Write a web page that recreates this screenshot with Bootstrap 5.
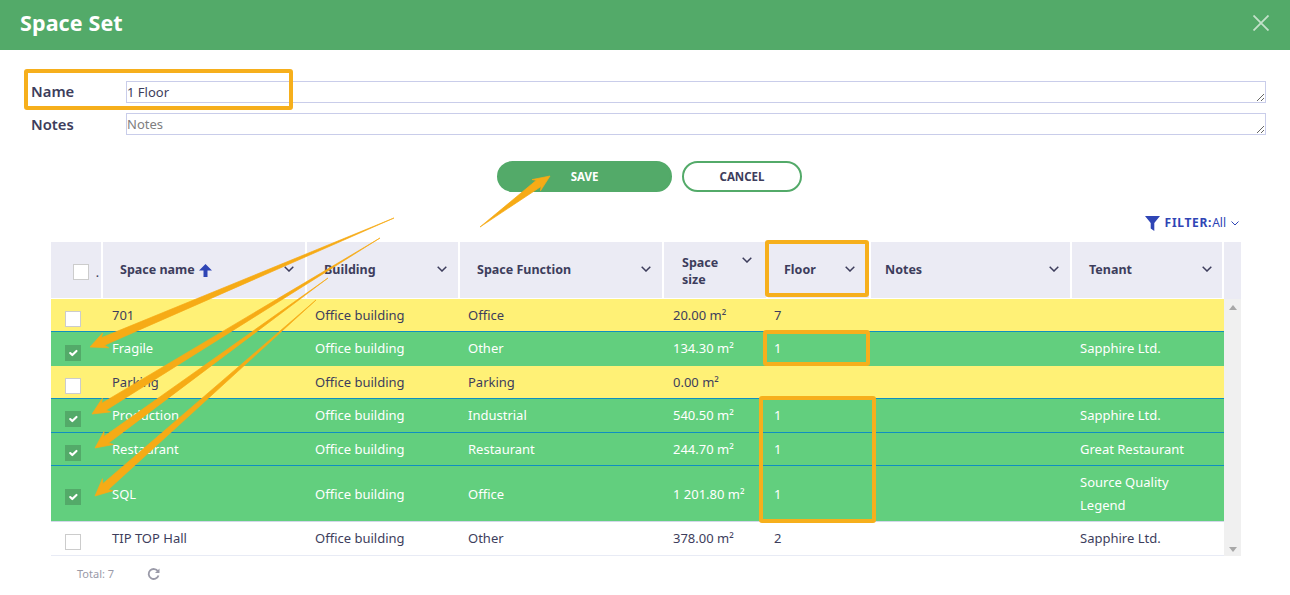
<!DOCTYPE html>
<html lang="en">
<head>
<meta charset="utf-8">
<title>Space Set</title>
<link rel="stylesheet" href="https://cdn.jsdelivr.net/npm/bootstrap@5.3.0/dist/css/bootstrap.min.css">
<style>
body{margin:0;font-family:"Noto Sans","Open Sans","Liberation Sans",sans-serif;font-size:13px;color:#3d3d5c;background:#fff}
.page-wrap{position:relative;width:1290px;height:595px;overflow:hidden}
.top-bar{height:50px;background:#53aa69;color:#fff;padding:0 21px 0 20px}
.top-bar h1{font-size:21.5px;font-weight:700;margin:0 0 5px;letter-spacing:.1px}
.close-x{background:none;border:0;padding:0;line-height:0;margin-bottom:5px}
.form-area{padding:31px 24px 0 31px}
.form-line{height:22px}
.form-line+.form-line{margin-top:10px}
.form-line label{width:95px;font-size:14.8px;font-weight:600;color:#3d3d5c;margin-bottom:2px}
.form-line+.form-line label{margin-bottom:0}
.form-line textarea{flex:1;height:22px;border:1px solid #c9cdea;border-radius:0;padding:0;font-size:13px;line-height:20px;color:#3d3d5c;outline:0;font-family:inherit;display:block}
.form-line textarea::placeholder{color:#808080}
.action-line{margin-top:26px;padding-left:9px;gap:10px}
.act-btn{height:31px;border-radius:16px;font-size:11.5px;font-weight:700;padding:0;line-height:1}
.act-save{width:175px;background:#53aa69;border:2px solid #53aa69;color:#fff}
.act-cancel{width:120px;background:#fff;border:2px solid #53aa69;color:#3d3d5c}
.filter-line{height:50px;padding:0 51px 10px 0;color:#2f45b5;font-size:12px;gap:5px}
.filter-line b{letter-spacing:.7px;font-weight:700}
.filter-funnel{margin-bottom:1px}
.filter-chev{margin:0 0 6px 0}
.grid-shell{margin:0 49px 0 51px;border-bottom:0}
.grid-table{table-layout:fixed;width:1173px;margin:0;border-collapse:separate;border-spacing:0}
.grid-table>thead>tr>th{height:57px;background:#ebebf4;color:#3d3d5c;font-size:12.5px;font-weight:700;padding:0 11px 0 17px;border:0;border-right:2px solid #fff;border-bottom:1px solid #fff;line-height:17px;vertical-align:middle;box-shadow:none}
.grid-table>tbody>tr>td{height:33px;padding:0 8px;border:0;vertical-align:middle;color:#3d3d5c;background:#fff;font-size:13px;line-height:23px;box-shadow:none}
.grid-table>tbody>tr.tall-row>td{height:34px;padding-bottom:1px}
.grid-table>tbody>tr.double-row>td{height:56px;padding-top:1px}
.grid-table>tbody>tr.row-yellow>td{background:#fff176}
.grid-table>tbody>tr.row-green>td{background:#62cf7e;color:#fff}
.grid-table>tbody>tr.line-blue>td{border-bottom:1px solid #0f8fc0}
.grid-table>tbody>tr.line-soft>td{border-bottom:1px solid #d3d8ea}
.grid-table>tbody>tr.line-end>td{border-bottom:1px solid #e8ebf5}
.grid-table>tbody>tr>td:nth-child(2),.grid-table>tbody>tr>td:nth-child(5){padding-left:9px}
.grid-table>tbody>tr>td:nth-child(6){padding-left:6px}
.grid-table>thead>tr>th:nth-child(5){padding-left:18px;padding-right:14px}
.grid-table>thead>tr>th:nth-child(6){padding-left:16px;padding-right:14px}
.grid-table>thead>tr>th:nth-child(7){padding-left:14px}
.grid-table>thead>tr>th:nth-child(8){padding-right:10px}
.grid-table>thead>tr>th:first-child{padding:0 0 0 22px}
.grid-table>tbody>tr>td:first-child{padding:0 0 0 14px}
.head-text{margin-bottom:2px}
.head-two{margin-top:2px}
.sort-up{margin-left:1px;vertical-align:-3px}
.chev{flex:none;margin-bottom:3px}
.chev-high{align-self:flex-start;margin:5px 0 0}
.tick-box.form-check-input{width:16px;height:16px;border-radius:0;border:1px solid #ccc;margin:7px 0 0;display:block;background-color:#fff;box-shadow:none;float:none}
.tick-box.form-check-input:checked{background-color:#53aa69;border-color:#53aa69}
.head-tick.form-check-input{margin:4px 0 0}
.cut-mark{margin:8px 0 0 7px;font-size:10px;line-height:1}
.side-bar{width:17px;background:#f0f0f0}
.side-top{height:57px;background:#ebebf4}
.side-arrows{padding:6px 0 4px}
.foot-line{padding:10px 0 0 77px;color:#9a9aa8;font-size:11px;gap:33px}
.note-layer{position:absolute;left:0;top:0;pointer-events:none}
</style>
</head>
<body>
<div class="page-wrap">
  <header class="top-bar d-flex align-items-center justify-content-between">
    <h1>Space Set</h1>
    <button class="close-x" type="button" aria-label="Close">
      <svg width="16" height="16" viewBox="0 0 16 16"><path d="M.5.5l15 15M15.5.5l-15 15" stroke="#fff" stroke-opacity=".65" stroke-width="1.8" fill="none"/></svg>
    </button>
  </header>

  <form class="form-area">
    <div class="form-line d-flex align-items-center">
      <label for="f-name">Name</label>
      <textarea id="f-name">1 Floor</textarea>
    </div>
    <div class="form-line d-flex align-items-center">
      <label for="f-notes">Notes</label>
      <textarea id="f-notes" placeholder="Notes"></textarea>
    </div>
  </form>

  <div class="action-line d-flex justify-content-center">
    <button type="button" class="btn act-btn act-save">SAVE</button>
    <button type="button" class="btn act-btn act-cancel">CANCEL</button>
  </div>

  <div class="filter-line d-flex align-items-end justify-content-end">
    <svg class="filter-funnel" width="15" height="15" viewBox="0 0 15 15"><path d="M0 0h15L9.300 7v8L5.700 12.600V7z" fill="#2f45b5"/></svg>
    <span><b>FILTER:</b>All</span>
    <svg class="filter-chev" width="8" height="5" viewBox="0 0 8 5"><path d="M.5.5L4 4 7.500.5" stroke="#2f45b5" fill="none"/></svg>
  </div>

  <div class="grid-shell d-flex">
    <table class="table grid-table">
      <colgroup>
        <col style="width:52px"><col style="width:204px"><col style="width:153px"><col style="width:204px"><col style="width:104px"><col style="width:103px"><col style="width:201px"><col style="width:152px">
      </colgroup>
      <thead>
        <tr>
          <th><div class="d-flex"><input class="form-check-input tick-box head-tick" type="checkbox" aria-label="Select all"><span class="cut-mark">.</span></div></th>
          <th><div class="d-flex align-items-center justify-content-between"><span class="head-text">Space name <svg class="sort-up" width="13" height="13" viewBox="0 0 13 13"><path d="M6.500 0L13 6.500H8.500V13H4.500V6.500H0z" fill="#2f45b5"/></svg></span><svg class="chev" width="10" height="6" viewBox="0 0 10 6"><path d="M.7.700L5 5 9.300.7" stroke="#3d3d5c" stroke-width="1.500" fill="none"/></svg></div></th>
          <th><div class="d-flex align-items-center justify-content-between"><span class="head-text">Building</span><svg class="chev" width="10" height="6" viewBox="0 0 10 6"><path d="M.7.700L5 5 9.300.7" stroke="#3d3d5c" stroke-width="1.500" fill="none"/></svg></div></th>
          <th><div class="d-flex align-items-center justify-content-between"><span class="head-text">Space Function</span><svg class="chev" width="10" height="6" viewBox="0 0 10 6"><path d="M.7.700L5 5 9.300.7" stroke="#3d3d5c" stroke-width="1.500" fill="none"/></svg></div></th>
          <th><div class="d-flex align-items-center justify-content-between"><span class="head-two">Space<br>size</span><svg class="chev chev-high" width="10" height="6" viewBox="0 0 10 6"><path d="M.7.700L5 5 9.300.7" stroke="#3d3d5c" stroke-width="1.500" fill="none"/></svg></div></th>
          <th><div class="d-flex align-items-center justify-content-between"><span class="head-text">Floor</span><svg class="chev" width="10" height="6" viewBox="0 0 10 6"><path d="M.7.700L5 5 9.300.7" stroke="#3d3d5c" stroke-width="1.500" fill="none"/></svg></div></th>
          <th><div class="d-flex align-items-center justify-content-between"><span class="head-text">Notes</span><svg class="chev" width="10" height="6" viewBox="0 0 10 6"><path d="M.7.700L5 5 9.300.7" stroke="#3d3d5c" stroke-width="1.500" fill="none"/></svg></div></th>
          <th><div class="d-flex align-items-center justify-content-between"><span class="head-text">Tenant</span><svg class="chev" width="10" height="6" viewBox="0 0 10 6"><path d="M.7.700L5 5 9.300.7" stroke="#3d3d5c" stroke-width="1.500" fill="none"/></svg></div></th>
        </tr>
      </thead>
      <tbody>
        <tr class="row-yellow line-blue"><td><input class="form-check-input tick-box" type="checkbox" aria-label="Select"></td><td>701</td><td>Office building</td><td>Office</td><td>20.00 m²</td><td>7</td><td></td><td></td></tr>
        <tr class="row-green tall-row"><td><input class="form-check-input tick-box" type="checkbox" checked aria-label="Select"></td><td>Fragile</td><td>Office building</td><td>Other</td><td>134.30 m²</td><td>1</td><td></td><td>Sapphire Ltd.</td></tr>
        <tr class="row-yellow line-blue"><td><input class="form-check-input tick-box" type="checkbox" aria-label="Select"></td><td>Parking</td><td>Office building</td><td>Parking</td><td>0.00 m²</td><td></td><td></td><td></td></tr>
        <tr class="row-green tall-row line-blue"><td><input class="form-check-input tick-box" type="checkbox" checked aria-label="Select"></td><td>Production</td><td>Office building</td><td>Industrial</td><td>540.50 m²</td><td>1</td><td></td><td>Sapphire Ltd.</td></tr>
        <tr class="row-green line-blue"><td><input class="form-check-input tick-box" type="checkbox" checked aria-label="Select"></td><td>Restaurant</td><td>Office building</td><td>Restaurant</td><td>244.70 m²</td><td>1</td><td></td><td>Great Restaurant</td></tr>
        <tr class="row-green double-row line-soft"><td><input class="form-check-input tick-box" type="checkbox" checked aria-label="Select"></td><td>SQL</td><td>Office building</td><td>Office</td><td>1 201.80 m²</td><td>1</td><td></td><td>Source Quality<br>Legend</td></tr>
        <tr class="tall-row line-end"><td><input class="form-check-input tick-box" type="checkbox" aria-label="Select"></td><td>TIP TOP Hall</td><td>Office building</td><td>Other</td><td>378.00 m²</td><td>2</td><td></td><td>Sapphire Ltd.</td></tr>
      </tbody>
    </table>
    <div class="side-bar d-flex flex-column">
      <div class="side-top"></div>
      <div class="side-arrows flex-fill d-flex flex-column justify-content-between align-items-center">
        <svg width="8" height="5" viewBox="0 0 8 5"><path d="M4 0l4 5H0z" fill="#a8a8a8"/></svg>
        <svg width="8" height="5" viewBox="0 0 8 5"><path d="M0 0h8L4 5z" fill="#a8a8a8"/></svg>
      </div>
    </div>
  </div>

  <div class="foot-line d-flex align-items-center">
    <span>Total: 7</span>
    <svg width="13" height="13" viewBox="0 0 13 13"><path d="M11 3.400A5 5 0 1 0 11.500 7.500" stroke="#9a9aa8" stroke-width="1.800" fill="none"/><path d="M12.500.5v4.500H8z" fill="#9a9aa8"/></svg>
  </div>

  <svg class="note-layer" width="1290" height="595" viewBox="0 0 1290 595" aria-hidden="true">
    <g fill="none" stroke="#f6af1c" stroke-width="4">
      <rect x="26" y="71" width="265" height="37" rx="1"/>
      <rect x="767" y="242" width="100" height="53" rx="1"/>
      <rect x="765" y="332" width="103" height="32" rx="1"/>
      <rect x="761" y="398" width="113" height="123" rx="1"/>
    </g>
    <g fill="#f6ab16" stroke="#f6ab16" stroke-width=".7" stroke-linejoin="round">
      <polygon points="394,218 104.500,345.200 108.800,347.800 90,347 102.600,333 101.300,337.800"/>
      <polygon points="380,238 106,410.200 110.700,411.900 92,414 102.300,398.300 101.800,403.200"/>
      <polygon points="328,278 108.700,442.900 113.400,444.500 95,448 104,431.500 103.900,436.500"/>
      <polygon points="316,300 108.200,489.700 113,490.700 95,496 102.400,478.700 102.800,483.700"/>
      <polygon points="480,227 541,186.500 540.500,190.800 550,176 532.100,179.600 536.300,180.300"/>
    </g>
  </svg>
</div>
<script src="https://cdn.jsdelivr.net/npm/bootstrap@5.3.0/dist/js/bootstrap.bundle.min.js"></script>
</body>
</html>
